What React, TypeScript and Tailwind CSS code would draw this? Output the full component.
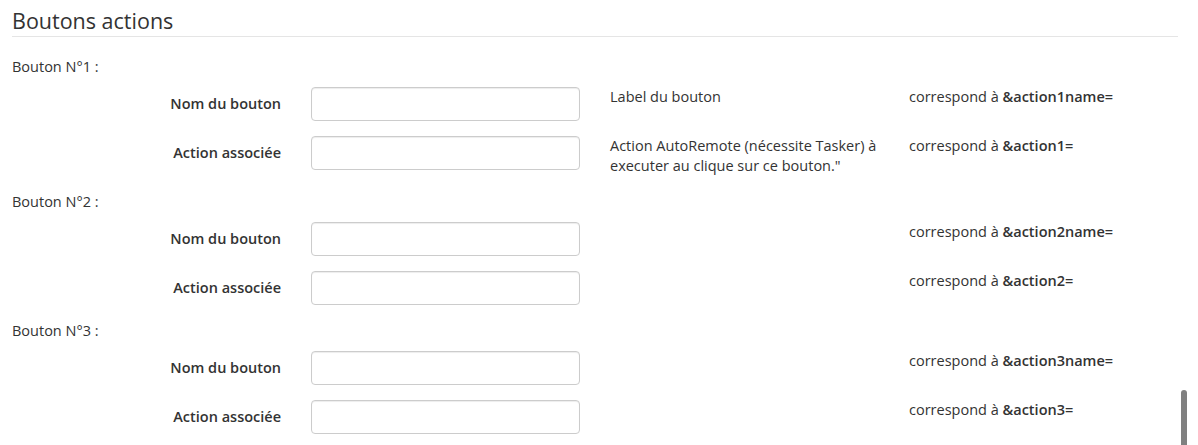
import React from "react";

type Field = {
  label: string;
  help?: React.ReactNode;
  param: string;
};

type Block = {
  title: string;
  fields: Field[];
};

const blocks: Block[] = [
  {
    title: "Bouton N°1 :",
    fields: [
      { label: "Nom du bouton", help: "Label du bouton", param: "&action1name=" },
      {
        label: "Action associée",
        help: (
          <>
            Action AutoRemote (nécessite Tasker) à
            <br />
            executer au clique sur ce bouton."
          </>
        ),
        param: "&action1=",
      },
    ],
  },
  {
    title: "Bouton N°2 :",
    fields: [
      { label: "Nom du bouton", param: "&action2name=" },
      { label: "Action associée", param: "&action2=" },
    ],
  },
  {
    title: "Bouton N°3 :",
    fields: [
      { label: "Nom du bouton", param: "&action3name=" },
      { label: "Action associée", param: "&action3=" },
    ],
  },
];

// One horizontal form row: label | input | help | param
const FieldRow: React.FC<{ field: Field }> = ({ field }) => (
  <div className="flex mb-[15px]">
    <label className="w-[284px] pr-[15px] pt-[7px] text-right font-semibold text-[#333]">
      {field.label}
    </label>
    <div className="w-[299px] px-[15px]">
      <input
        type="text"
        className="block w-full h-[34px] px-3 border border-[#ccc] rounded-[4px] bg-white shadow-[inset_0_1px_1px_rgba(0,0,0,0.075)] outline-none"
      />
    </div>
    <div className="w-[299px] px-[15px] whitespace-nowrap text-[#333]">{field.help}</div>
    <div className="px-[15px] text-[#333]">
      correspond à <span className="font-semibold">{field.param}</span>
    </div>
  </div>
);

export default function App() {
  return (
    <div
      className="relative w-[1198px] h-[445px] overflow-hidden bg-white text-[14.5px] leading-5 text-[#333]"
      style={{ fontFamily: '"Open Sans", "Noto Sans", sans-serif' }}
    >
      <div className="pl-[12px] w-[1178px]">
        {/* Section title */}
        <div className="pt-[6px] h-[37px] mb-[19px] border-b border-[#e5e5e5] text-[21.5px] leading-[30px] text-[#333]">
          Boutons actions
        </div>

        {blocks.map((block) => (
          <div key={block.title}>
            <div className="h-[21px] leading-[21px] mb-[10px]">{block.title}</div>
            {block.fields.map((f) => (
              <FieldRow key={f.param} field={f} />
            ))}
          </div>
        ))}
      </div>

      {/* Scrollbar thumb */}
      <div className="absolute left-[1181px] top-[390px] w-[6px] h-[60px] rounded-t-[3px] bg-[#808080]" />
    </div>
  );
}
